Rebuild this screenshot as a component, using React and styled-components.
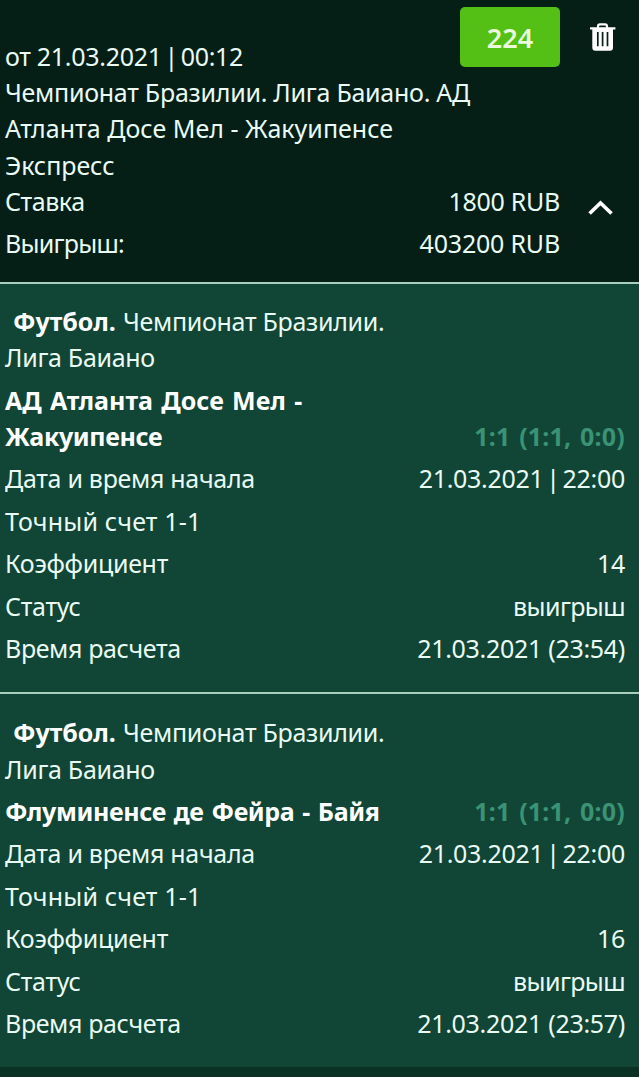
import styled, { createGlobalStyle } from "styled-components"

const eventos = [
    {
        times: [
            { nome: "АД Атланта Досе Мел -", espaco: 0.02 },
            { nome: "Жакуипенсе", espaco: -0.35 }
        ],
        placar: "1:1 (1:1, 0:0)",
        dia: "21.03.2021",
        hora: "22:00",
        coeficiente: "14",
        calculo: "21.03.2021 (23:54)"
    },
    {
        times: [{ nome: "Флуминенсе де Фейра - Байя", espaco: -0.38 }],
        placar: "1:1 (1:1, 0:0)",
        dia: "21.03.2021",
        hora: "22:00",
        coeficiente: "16",
        calculo: "21.03.2021 (23:57)"
    }
]

function Evento({ evento }){
    return(
        <StyledEvento>
            <Linha>
                <Campeonato><b>Футбол.</b> Чемпионат Бразилии.<br/>Лига Баиано</Campeonato>
            </Linha>
            <Linha>
                <div>
                    {evento.times.map((time) => <Time key={time.nome} $espaco={time.espaco}>{time.nome}</Time>)}
                </div>
                <Placar>{evento.placar}</Placar>
            </Linha>
            <Linha>
                <Texto>Дата и время начала</Texto>
                <Texto>{evento.dia}<Barra> | </Barra>{evento.hora}</Texto>
            </Linha>
            <Linha>
                <Texto $espaco={0.17}>Точный счет 1-1</Texto>
            </Linha>
            <Linha>
                <Texto>Коэффициент</Texto>
                <Texto>{evento.coeficiente}</Texto>
            </Linha>
            <Linha>
                <Texto>Статус</Texto>
                <Texto $espaco={-0.6}>выигрыш</Texto>
            </Linha>
            <Linha>
                <Texto $espaco={-0.37}>Время расчета</Texto>
                <Texto>{evento.calculo}</Texto>
            </Linha>
        </StyledEvento>
    )
}

export default function App(){
    return(
        <Tela>
            <GlobalStyle />
            <Cabecalho>
                <Topo>
                    <Descricao>
                        <Texto>от 21.03.2021<Barra> | </Barra>00:12</Texto>
                        <Texto $espaco={-0.26}>Чемпионат Бразилии. Лига Баиано. АД</Texto>
                        <Texto $espaco={0.02}>Атланта Досе Мел - Жакуипенсе</Texto>
                        <Texto $espaco={-0.05}>Экспресс</Texto>
                    </Descricao>
                    <Botao>224</Botao>
                    <BotaoIcone $topo={23} $lado={29}>
                        <svg width="28" height="29" viewBox="0 0 28 29">
                            <path fill="none" stroke="#fff" strokeWidth="2.2" d="M9 5V3.5Q9 1.3 11 1.3H16Q18 1.3 18 3.5V5" />
                            <path fill="#fff" d="M1 4.3H26.4V6.6H24V24.5Q24 27.8 21 27.8H6.3Q3.3 27.8 3.3 24.5V6.6H1Z" />
                            <path fill="none" stroke="#051f17" strokeWidth="1.7" d="M8.8 9V23.2M13.6 9V23.2M18.5 9V23.2" />
                        </svg>
                    </BotaoIcone>
                </Topo>
                <Resumo>
                    <div>
                        <Linha $folga={5.3}>
                            <Texto $espaco={-0.45}>Ставка</Texto>
                            <Texto>1800 RUB</Texto>
                        </Linha>
                        <Linha>
                            <Texto $espaco={-0.75}>Выигрыш:</Texto>
                            <Texto $espaco={-0.2}>403200 RUB</Texto>
                        </Linha>
                    </div>
                    <BotaoIcone $topo={17} $lado={28}>
                        <svg width="26" height="16" viewBox="0 0 26 16">
                            <path fill="none" stroke="#fff" strokeWidth="3.7" d="M1.6 13.5L12.5 3L23.5 13.5" />
                        </svg>
                    </BotaoIcone>
                </Resumo>
            </Cabecalho>
            {eventos.map((evento) => <Evento key={evento.calculo} evento={evento} />)}
        </Tela>
    )
}

const GlobalStyle = createGlobalStyle`
    * {
        box-sizing: border-box;
    }

    body {
        margin: 0;
        background: #0b3125;
    }

    p {
        margin: 0;
    }
`;

const Tela = styled.div`
    width: 639px;
    height: 1077px;
    overflow: hidden;
    background: #0b3125;
    font-family: "Noto Sans", "Open Sans", sans-serif;
    font-size: 25px;
    line-height: 36.3px;
    letter-spacing: -0.3px;
    color: #e9fbf3;
    white-space: nowrap;
`;

const Cabecalho = styled.div`
    height: 284px;
    background: #051f17;
    border-bottom: 2px solid #a9cfbf;
`;

const Topo = styled.div`
    display: grid;
    grid-template-columns: 1fr 100px 79px;
    padding-left: 5px;
`;

const Descricao = styled.div`
    width: 0;
    padding-top: 37.8px;
`;

const Botao = styled.button`
    height: 60px;
    margin-top: 7px;
    padding: 0;
    border: none;
    border-radius: 5px;
    background: #54c015;
    color: #e9fbdc;
    font-family: inherit;
    font-size: 27px;
    font-weight: 600;
    cursor: pointer;
`;

const BotaoIcone = styled.div`
    padding: ${(props) => props.$topo}px 0 0 ${(props) => props.$lado}px;
    cursor: pointer;

    svg {
        display: block;
    }
`;

const Resumo = styled.div`
    display: grid;
    grid-template-columns: 1fr 79px;
    padding-left: 5px;
`;

const Linha = styled.div`
    display: flex;
    justify-content: space-between;
    align-items: flex-end;
    padding-bottom: ${(props) => props.$folga ?? 6.1}px;
`;

const Texto = styled.p`
    letter-spacing: ${(props) => props.$espaco ?? -0.3}px;
`;

const Barra = styled.span`
    word-spacing: -3.4px;
`;

const Campeonato = styled.p`
    b {
        margin-left: 8px;
        margin-right: 1px;
        letter-spacing: -0.05px;
        color: #fff;
    }
`;

const Time = styled.div`
    font-weight: 700;
    letter-spacing: ${(props) => props.$espaco}px;
    word-spacing: 1.8px;
    color: #fff;
`;

const Placar = styled.p`
    font-weight: 700;
    letter-spacing: 0.2px;
    word-spacing: 2px;
    color: #3b9275;
`;

const StyledEvento = styled.div`
    padding: 19.1px 14px 19.6px 5px;
    background: #114535;

    & + & {
        padding-top: 20.4px;
        border-top: 2px solid #a9cfbf;
    }
`;
